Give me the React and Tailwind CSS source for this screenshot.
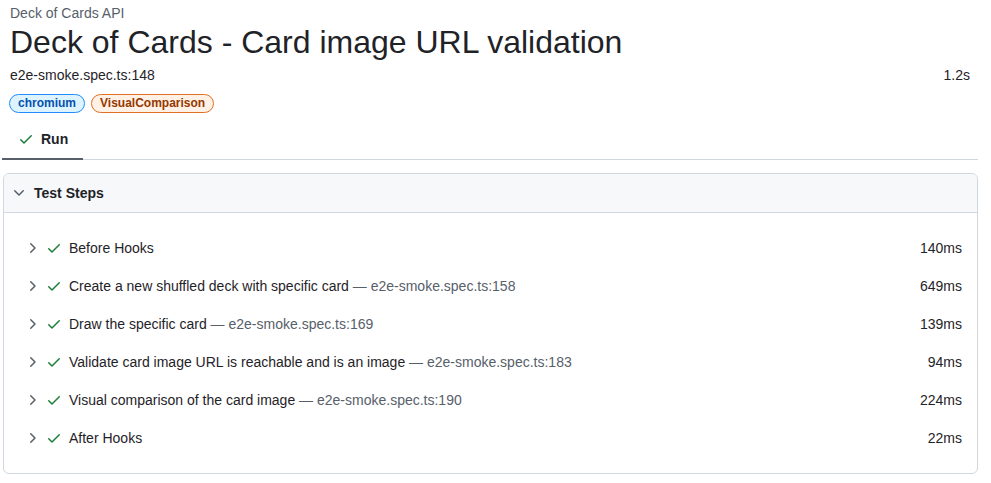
const steps = [
  { title: 'Before Hooks', loc: null, dur: '140ms' },
  { title: 'Create a new shuffled deck with specific card', loc: 'e2e-smoke.spec.ts:158', dur: '649ms' },
  { title: 'Draw the specific card', loc: 'e2e-smoke.spec.ts:169', dur: '139ms' },
  { title: 'Validate card image URL is reachable and is an image', loc: 'e2e-smoke.spec.ts:183', dur: '94ms' },
  { title: 'Visual comparison of the card image', loc: 'e2e-smoke.spec.ts:190', dur: '224ms' },
  { title: 'After Hooks', loc: null, dur: '22ms' },
];

function Check({ className }) {
  return (
    <svg viewBox="0 0 16 16" width="16" height="16" className={className} fill="currentColor">
      <path d="M13.78 4.22a.75.75 0 0 1 0 1.06l-7.25 7.25a.75.75 0 0 1-1.06 0L2.22 9.28a.75.75 0 0 1 1.06-1.06L6 10.94l6.72-6.72a.75.75 0 0 1 1.06 0Z" />
    </svg>
  );
}

function ChevronRight() {
  return (
    <svg viewBox="0 0 16 16" width="16" height="16" className="text-[#57606a]" fill="currentColor">
      <path d="M6.22 3.22a.75.75 0 0 1 1.06 0l4.25 4.25a.75.75 0 0 1 0 1.06l-4.25 4.25a.75.75 0 0 1-1.06-1.06L9.94 8 6.22 4.28a.75.75 0 0 1 0-1.06Z" />
    </svg>
  );
}

function ChevronDown() {
  return (
    <svg viewBox="0 0 16 16" width="16" height="16" className="text-[#57606a]" fill="currentColor">
      <path d="M12.78 5.22a.749.749 0 0 1 0 1.06l-4.25 4.25a.749.749 0 0 1-1.06 0L3.22 6.28a.749.749 0 1 1 1.06-1.06L8 8.939l3.72-3.719a.749.749 0 0 1 1.06 0Z" />
    </svg>
  );
}

export default function App() {
  return (
    <div className="min-h-screen bg-white pl-[2px] pr-[13px] text-[#1f2328]" style={{ fontFamily: '"Liberation Sans", Arial, sans-serif' }}>
      <div className="pl-[8px] pt-[4px]">
        <div className="text-[14px] leading-[18px] text-[#57606a]">Deck of Cards API</div>
        <h1 className="text-[32px] leading-[40px] font-normal">Deck of Cards - Card image URL validation</h1>
        <div className="flex justify-between text-[14px] leading-[20px] mt-[3px]">
          <span>e2e-smoke.spec.ts:148</span>
          <span className="pr-[8px]">1.2s</span>
        </div>
        <div className="flex gap-[6px] mt-[9px] -ml-px">
          <span className="rounded-full border border-[#218bff] bg-[#ddf4ff] text-[#0550ae] text-[12px] leading-[17px] font-bold px-[8px]">chromium</span>
          <span className="rounded-full border border-[#e16f24] bg-[#fff1e5] text-[#953800] text-[12px] leading-[17px] font-bold px-[8px]">VisualComparison</span>
        </div>
      </div>

      <div className="mt-[9px] border-b border-[#d0d7de] flex">
        <div className="w-[81px] flex items-center gap-[7px] pl-[16px] h-[38px] border-b-2 border-[#57606a] -mb-px pb-[2px]">
          <Check className="text-[#1a7f37]" />
          <span className="text-[14px] font-bold">Run</span>
        </div>
      </div>

      <div className="mt-[13px] ml-px border border-[#d0d7de] rounded-md overflow-hidden">
        <div className="h-[39px] bg-[#f6f8fa] border-b border-[#d0d7de] flex items-center gap-[7px] pl-[7px]">
          <ChevronDown />
          <span className="text-[14px] font-bold">Test Steps</span>
        </div>
        <div className="pt-[16px] pb-[16px]">
          {steps.map((s) => (
            <div key={s.title} className="h-[38px] flex items-center pl-[20px] pr-[15px] text-[14px]">
              <ChevronRight />
              <Check className="ml-[6px] text-[#1a7f37]" />
              <span className="ml-[7px]">
                {s.title}
                {s.loc && <span className="text-[#57606a]"> — {s.loc}</span>}
              </span>
              <span className="ml-auto">{s.dur}</span>
            </div>
          ))}
        </div>
      </div>
    </div>
  );
}
